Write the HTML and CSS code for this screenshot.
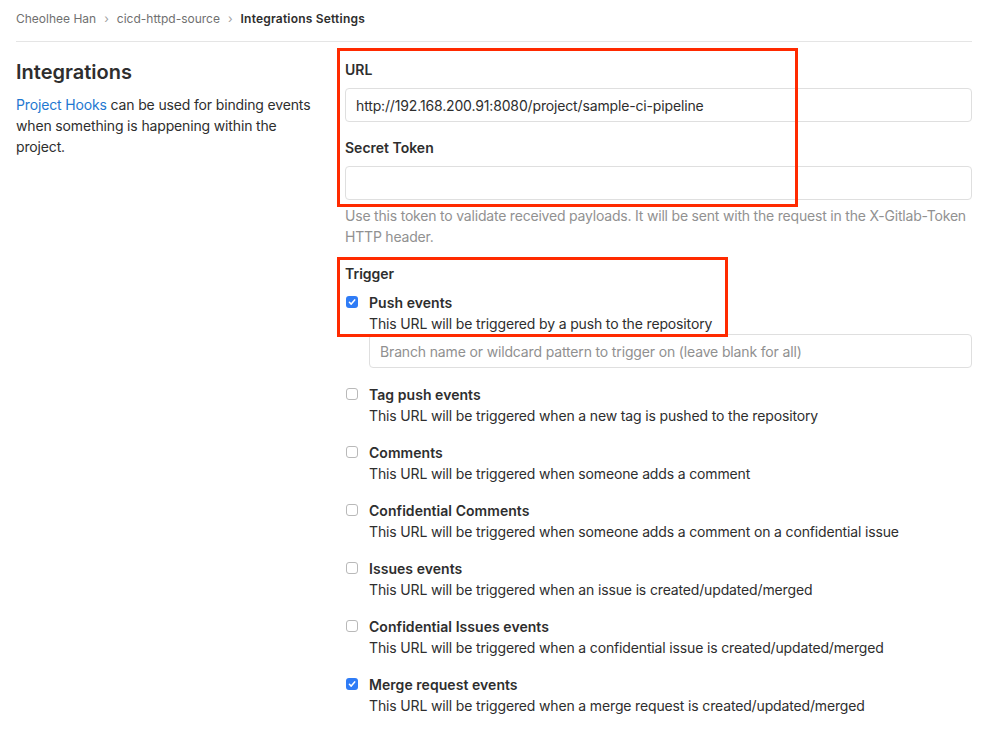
FILE: index.html
```html
<!DOCTYPE html>
<html>
<head>
<meta charset="utf-8">
<link rel="stylesheet" href="styles.css">
</head>
<body>
<div class="page">
  <nav class="breadcrumb">
    <span class="crumb">Cheolhee Han</span>
    <span class="sep">&#x203A;</span>
    <span class="crumb">cicd-httpd-source</span>
    <span class="sep">&#x203A;</span>
    <span class="crumb current">Integrations Settings</span>
  </nav>
  <div class="row">
    <div class="left">
      <h4 class="title">Integrations</h4>
      <p class="intro"><a class="link">Project Hooks</a> can be used for binding events when something is happening within the project.</p>
    </div>
    <div class="right">
      <div class="group">
        <div class="label">URL</div>
        <div class="input">http://192.168.200.91:8080/project/sample-ci-pipeline</div>
      </div>
      <div class="group secret">
        <div class="label">Secret Token</div>
        <div class="input"></div>
        <p class="help">Use this token to validate received payloads. It will be sent with the request in the X-Gitlab-Token HTTP header.</p>
      </div>
      <div class="group trigger">
        <div class="label">Trigger</div>
        <div class="item">
          <span class="cb checked"><svg viewBox="0 0 12 12" width="12" height="12"><path d="M3.4 6.3 L5.2 8.1 L8.7 3.9" fill="none" stroke="#fff" stroke-width="1.5" stroke-linecap="round" stroke-linejoin="round"/></svg></span>
          <div class="item-text">
            <div class="item-title">Push events</div>
            <div class="item-desc">This URL will be triggered by a push to the repository</div>
            <div class="input placeholder">Branch name or wildcard pattern to trigger on (leave blank for all)</div>
          </div>
        </div>
        <div class="item">
          <span class="cb"></span>
          <div class="item-text">
            <div class="item-title">Tag push events</div>
            <div class="item-desc">This URL will be triggered when a new tag is pushed to the repository</div>
          </div>
        </div>
        <div class="item">
          <span class="cb"></span>
          <div class="item-text">
            <div class="item-title">Comments</div>
            <div class="item-desc">This URL will be triggered when someone adds a comment</div>
          </div>
        </div>
        <div class="item">
          <span class="cb"></span>
          <div class="item-text">
            <div class="item-title">Confidential Comments</div>
            <div class="item-desc">This URL will be triggered when someone adds a comment on a confidential issue</div>
          </div>
        </div>
        <div class="item">
          <span class="cb"></span>
          <div class="item-text">
            <div class="item-title">Issues events</div>
            <div class="item-desc">This URL will be triggered when an issue is created/updated/merged</div>
          </div>
        </div>
        <div class="item">
          <span class="cb"></span>
          <div class="item-text">
            <div class="item-title">Confidential Issues events</div>
            <div class="item-desc">This URL will be triggered when a confidential issue is created/updated/merged</div>
          </div>
        </div>
        <div class="item">
          <span class="cb checked"><svg viewBox="0 0 12 12" width="12" height="12"><path d="M3.4 6.3 L5.2 8.1 L8.7 3.9" fill="none" stroke="#fff" stroke-width="1.5" stroke-linecap="round" stroke-linejoin="round"/></svg></span>
          <div class="item-text">
            <div class="item-title">Merge request events</div>
            <div class="item-desc">This URL will be triggered when a merge request is created/updated/merged</div>
          </div>
        </div>
      </div>
      <div class="mark mark-1"></div>
      <div class="mark mark-2"></div>
    </div>
  </div>
</div>
</body>
</html>
```

FILE: styles.css
```css
html, body {
  margin: 0;
  padding: 0;
  background: #fff;
}
body {
  font-family: Inter, "Liberation Sans", Arial, sans-serif;
  color: #2e2e2e;
  font-size: 14px;
  letter-spacing: -0.15px;
  overflow: hidden;
}
.page {
  width: 956px;
  margin-left: 16px;
}
.breadcrumb {
  height: 37px;
  display: flex;
  align-items: center;
  gap: 8px;
  font-size: 12px;
  letter-spacing: 0;
  color: #707070;
  border-bottom: 1px solid #e5e5e5;
  box-sizing: content-box;
  padding-bottom: 4px;
}
.sep {
  color: #a0a0a0;
  font-size: 12px;
}
.current {
  color: #2e2e2e;
  font-weight: 600;
  letter-spacing: 0.2px;
}
.row {
  display: flex;
}
.left {
  width: 299px;
  flex: none;
}
.title {
  margin: 16px 0 8px;
  font-size: 20px;
  line-height: 28px;
  font-weight: 600;
  letter-spacing: 0;
}
.intro {
  margin: 0;
  line-height: 21px;
  padding-right: 4px;
}
.link {
  color: #1f78d1;
}
.right {
  position: relative;
  margin-left: 30px;
  flex: 1;
  padding-top: 18px;
}
.group {
  margin-bottom: 16px;
}
.group.secret {
  margin-bottom: 17px;
}
.label {
  font-weight: 600;
  line-height: 20px;
  margin-bottom: 8px;
  letter-spacing: 0;
}
.input {
  height: 34px;
  box-sizing: border-box;
  border: 1px solid #dfdfdf;
  border-radius: 4px;
  padding: 0 10px;
  display: flex;
  align-items: center;
  color: #2e2e2e;
}
.input.placeholder {
  color: #909090;
}
.help {
  margin: 5px 0 0;
  line-height: 21px;
  color: #919191;
  letter-spacing: -0.2px;
}
.item {
  display: flex;
  margin-bottom: 16px;
}
.cb {
  flex: none;
  width: 12px;
  height: 12px;
  box-sizing: border-box;
  margin: 4px 11px 0 1px;
  border: 1px solid #b9b9b9;
  border-radius: 3px;
  background: #fff;
  display: flex;
}
.cb.checked {
  border: none;
  background: #2f7cf6;
}
.item-text {
  flex: 1;
}
.item-title {
  font-weight: 600;
  line-height: 21px;
  letter-spacing: 0.05px;
}
.item-desc {
  line-height: 21px;
}
.mark {
  position: absolute;
  border: 3px solid #ff2a00;
  box-sizing: border-box;
}
.mark-1 {
  left: -8px;
  top: 6px;
  width: 461px;
  height: 159px;
}
.mark-2 {
  left: -8px;
  top: 215px;
  width: 391px;
  height: 80px;
}
```
